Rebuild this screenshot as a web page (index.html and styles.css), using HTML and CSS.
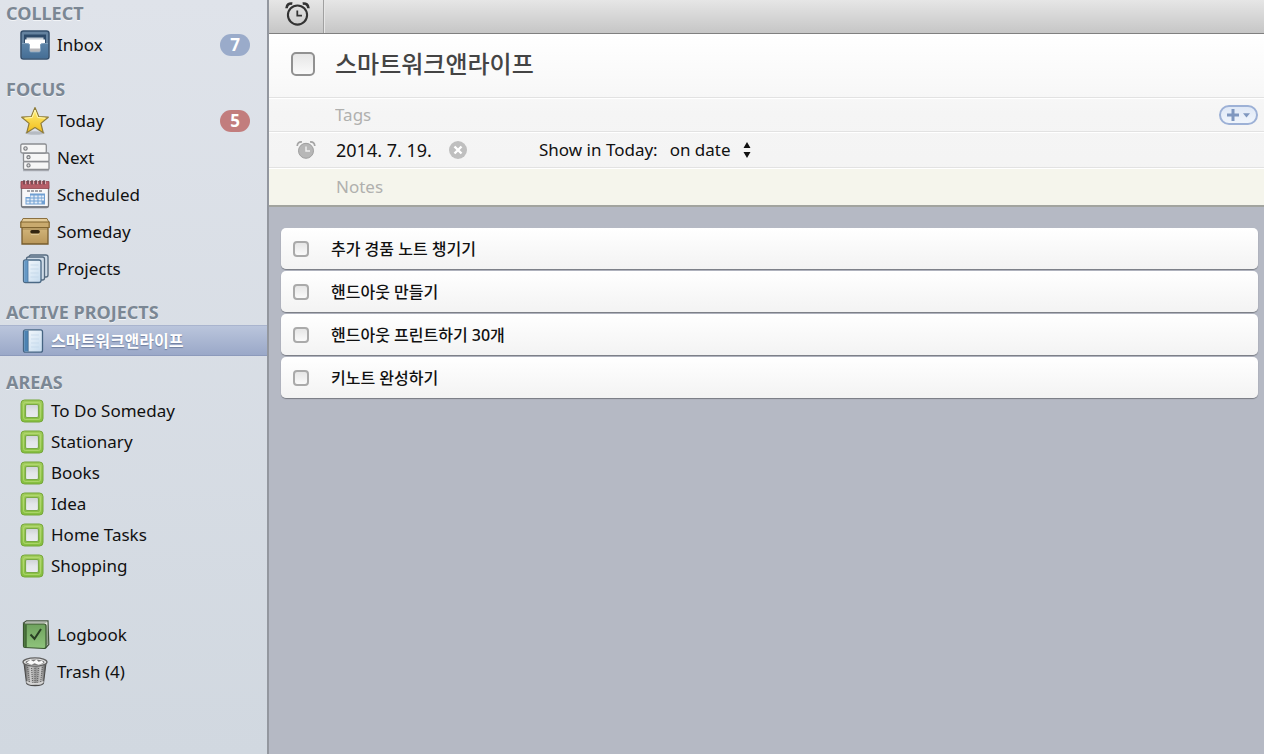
FILE: index.html
```html
<!DOCTYPE html>
<html lang="ko">
<head>
<meta charset="utf-8">
<meta name="viewport" content="width=device-width, initial-scale=1">
<title>Things</title>
<link rel="stylesheet" href="styles.css">
</head>
<body>
<svg class="defs" aria-hidden="true">
  <defs>
    <linearGradient id="g-blue" x1="0" y1="0" x2="0" y2="1"><stop offset="0" stop-color="#5c84a8"/><stop offset="1" stop-color="#456e95"/></linearGradient>
    <linearGradient id="g-star" x1="0" y1="0" x2="0" y2="1"><stop offset="0" stop-color="#fff27a"/><stop offset="1" stop-color="#f2bc1b"/></linearGradient>
    <linearGradient id="g-box" x1="0" y1="0" x2="0" y2="1"><stop offset="0" stop-color="#d3b67c"/><stop offset="1" stop-color="#b9975a"/></linearGradient>
    <linearGradient id="g-page" x1="0" y1="0" x2="1" y2="1"><stop offset="0" stop-color="#f8fbfe"/><stop offset="1" stop-color="#c5dbee"/></linearGradient>
    <linearGradient id="g-green" x1="0" y1="0" x2="0" y2="1"><stop offset="0" stop-color="#6fa25e"/><stop offset="1" stop-color="#8fc47c"/></linearGradient>
    <linearGradient id="g-can" x1="0" y1="0" x2="1" y2="0"><stop offset="0" stop-color="#555"/><stop offset=".3" stop-color="#ccc"/><stop offset=".55" stop-color="#929292"/><stop offset=".75" stop-color="#c4c4c4"/><stop offset="1" stop-color="#505050"/></linearGradient>
    <linearGradient id="g-area" x1="0" y1="0" x2="0" y2="1"><stop offset="0" stop-color="#a2cd5c"/><stop offset="1" stop-color="#86c03f"/></linearGradient>
    <linearGradient id="g-well" x1="0" y1="0" x2="0" y2="1"><stop offset="0" stop-color="#cfd2d7"/><stop offset=".5" stop-color="#e3e6ea"/><stop offset="1" stop-color="#e9ebee"/></linearGradient>
    <symbol id="i-area" viewBox="0 0 24 24">
      <rect x="1" y="1" width="22" height="22" rx="3.500" fill="url(#g-area)" stroke="#74a638"/>
      <rect x="3.500" y="3.500" width="17" height="17" rx="2" fill="none" stroke="#b9db7c" stroke-opacity=".7"/>
      <rect x="5.500" y="5.500" width="13" height="13" rx="1.500" fill="url(#g-well)" stroke="#7aa946" stroke-width="1.200"/>
    </symbol>
  </defs>
</svg>

<div class="app">
  <nav class="sidebar" aria-label="Lists">
    <section class="group">
      <h2 class="heading">COLLECT</h2>
      <a class="item" href="#inbox">
        <svg class="icon" viewBox="0 0 30 30"><rect x="1" y="1" width="28" height="28" rx="2.500" fill="#64829f" stroke="#35506d" stroke-width="1.500"/><path d="M4 4.500h22V14H4z" fill="#2d4a69"/><path d="M6.500 7.500h17V14h-17z" fill="#c6ced7"/><path d="M5 9.500h20V13h-3.500l-1.500 2v9H10v-9l-1.500-2H5z" fill="#fff"/><path d="M10 18.500h10V24H10z" fill="#b7b7ba"/><path d="M2 13.500h5.500c1.300 0 2 .7 2 2V20c0 1.500.5 2 2 2h7c1.500 0 2-.5 2-2v-4.500c0-1.300.7-2 2-2H28v13c0 1.200-.5 1.800-1.500 1.800h-23c-1 0-1.500-.6-1.500-1.800z" fill="url(#g-blue)"/><path d="M2 13.500h5.500c1.300 0 2 .7 2 2V20c0 1.500.5 2 2 2h7c1.500 0 2-.5 2-2v-4.500c0-1.300.7-2 2-2H28" fill="none" stroke="#8caac5" stroke-width=".8"/></svg>
        <span>Inbox</span><span class="badge badge-blue">7</span>
      </a>
    </section>

    <section class="group">
      <h2 class="heading">FOCUS</h2>
      <a class="item" href="#today">
        <svg class="icon" viewBox="0 0 30 30"><ellipse cx="15" cy="27" rx="10" ry="1.800" fill="#7d8189" opacity=".4"/><path d="M15 1.500l3.700 9 9.600.7-7.400 6.200 2.400 9.400-8.300-5.200-8.300 5.200 2.400-9.400-7.400-6.200 9.600-.7z" fill="url(#g-star)" stroke="#8f7c3a" stroke-width="1.200" stroke-linejoin="round"/><path d="M15 4l2.800 7.500 7.500.7M15 4l-2.800 7.500-7.500.7" fill="none" stroke="#fff9bd" stroke-width=".9"/></svg>
        <span>Today</span><span class="badge badge-red">5</span>
      </a>
      <a class="item" href="#next">
        <svg class="icon" viewBox="0 0 30 30"><path d="M3 27.500h26" stroke="#999ea6" stroke-width="1.500" opacity=".7"/><g fill="#f6f6f6" stroke="#8b8d91" stroke-width="1.300"><rect x="3.500" y="18.500" width="25.500" height="8" rx="1"/><rect x="3.500" y="10" width="25.500" height="8.500" rx="1"/><rect x=".8" y="1" width="25.500" height="9" rx="1.500"/></g><g fill="#ddd" stroke="#77797d" stroke-width="1.100"><circle cx="5.500" cy="5.500" r="1.700"/><circle cx="8.500" cy="14.200" r="1.600"/><circle cx="8.500" cy="22.400" r="1.600"/></g></svg>
        <span>Next</span>
      </a>
      <a class="item" href="#scheduled">
        <svg class="icon" viewBox="0 0 30 30"><path d="M1.500 6h27v19.500c0 1.500-.7 2-2 2h-23c-1.300 0-2-.5-2-2z" fill="#f7f7f8" stroke="#777b82" stroke-width="1.300"/><path d="M2 27h26" stroke="#7b7f86" stroke-width="2"/><path d="M1 1.500h28v7H1z" fill="#b65e68" stroke="#8e434d" stroke-width=".8"/><path d="M4 0v4.500M8 0v4.500M12 0v4.500M16 0v4.500M20 0v4.500M24 0v4.500" stroke="#59424a" stroke-width="1.200"/><path d="M5.500 0v4M9.500 0v4M13.500 0v4M17.500 0v4M21.500 0v4M25.500 0v4" stroke="#e4c8cc" stroke-width=".8"/><path d="M7 11h16" stroke="#85878c" stroke-width="1.300" stroke-dasharray="3 1"/><path d="M10 13.500h15v11H5.500V17H10z" fill="#6f9fd2"/><path d="M10.500 15.500h3v2h-3zM14.500 15.500h3v2h-3zM18.500 15.500h3v2h-3zM22 15.500h2v2h-2zM6.500 18.500h3v2h-3zM10.500 18.500h3v2h-3zM14.500 18.500h3v2h-3zM18.500 18.500h3v2h-3zM22 18.500h2v2h-2zM6.500 21.500h3v2h-3zM10.500 21.500h3v2h-3zM14.500 21.500h3v2h-3zM18.500 21.500h3v2h-3z" fill="#e4edf7"/></svg>
        <span>Scheduled</span>
      </a>
      <a class="item" href="#someday">
        <svg class="icon" viewBox="0 0 30 30"><path d="M2 10h26v17H2z" fill="url(#g-box)" stroke="#775c2e" stroke-width="1.300"/><path d="M3 1.500h24l2 4H1z" fill="#e3cb98" stroke="#8b7040" stroke-width="1"/><path d="M.8 5h28.400v5.500H.8z" fill="#c9aa6e" stroke="#80642f" stroke-width="1.200"/><path d="M2 12h26" stroke="#866b3a" stroke-width="1" opacity=".6"/><rect x="10.300" y="13" width="9.500" height="3.400" rx="1.600" fill="#332511"/><path d="M11 17.400h8" stroke="#e5cfa1" stroke-width=".8"/></svg>
        <span>Someday</span>
      </a>
      <a class="item" href="#projects">
        <svg class="icon" viewBox="0 0 30 30"><g fill="#cfdbe7" stroke="#566b80" stroke-width="1.300"><rect x="9" y="1" width="19" height="22" rx="2"/><rect x="6.500" y="3" width="18" height="23" rx="2"/></g><rect x="3.500" y="6" width="17.500" height="22.500" rx="2" fill="url(#g-page)" stroke="#4b6985" stroke-width="1.300"/><path d="M4.200 7.500c0-.7.300-1 1-1H8v21.500H5.200c-.7 0-1-.3-1-1z" fill="#6598c5"/><path d="M8 6.500V28" stroke="#49759f" stroke-width=".8"/><path d="M10.500 11h8M10.500 15h8M10.500 19h8M10.500 23h8" stroke="#c3d7e9" stroke-width=".8"/></svg>
        <span>Projects</span>
      </a>
    </section>

    <section class="group group-active">
      <h2 class="heading">ACTIVE PROJECTS</h2>
      <a class="item item-small selected" href="#project" aria-current="page">
        <svg class="icon-small" viewBox="0 0 24 24"><rect x="3.500" y=".8" width="19" height="22.400" rx="2" fill="url(#g-page)" stroke="#466482" stroke-width="1.300"/><path d="M4.200 2.300c0-.6.300-.9.900-.9H8v21.200H5.100c-.6 0-.9-.3-.9-.9z" fill="#4c82b2"/><path d="M8.300 1.500v21" stroke="#375d82" stroke-width=".7"/><path d="M11 6h8M11 10h8M11 14h8M11 18h8" stroke="#c3d7e9" stroke-width=".7"/></svg>
        <span>스마트워크앤라이프</span>
      </a>
    </section>

    <section class="group">
      <h2 class="heading">AREAS</h2>
      <a class="item item-small" href="#someday-area"><svg class="icon-small"><use href="#i-area"/></svg><span>To Do Someday</span></a>
      <a class="item item-small" href="#stationary"><svg class="icon-small"><use href="#i-area"/></svg><span>Stationary</span></a>
      <a class="item item-small" href="#books"><svg class="icon-small"><use href="#i-area"/></svg><span>Books</span></a>
      <a class="item item-small" href="#idea"><svg class="icon-small"><use href="#i-area"/></svg><span>Idea</span></a>
      <a class="item item-small" href="#home"><svg class="icon-small"><use href="#i-area"/></svg><span>Home Tasks</span></a>
      <a class="item item-small" href="#shopping"><svg class="icon-small"><use href="#i-area"/></svg><span>Shopping</span></a>
    </section>

    <section class="group group-archive">
      <a class="item" href="#logbook">
        <svg class="icon" viewBox="0 0 30 30"><path d="M3.500 3l3-2.200H28l.8 23.700L26 27.500z" fill="#e9ece6" stroke="#43533e" stroke-width="1.200"/><path d="M26.500 5l1.500-2v21L26 26z" fill="#93a08d"/><path d="M5.500 2.600h21" stroke="#9aa595" stroke-width=".8"/><path d="M3.500 4H24c1.500 0 2 .5 2 2v20.500c0 1.300-.5 2-2 2L5 27.500c-1 0-1.500-.5-1.500-1.500z" fill="url(#g-green)" stroke="#38552f" stroke-width="1.200"/><path d="M4.200 4.600h2.600v22.500H5c-.6 0-.8-.4-.8-1z" fill="#446c38"/><path d="M10.500 14.500l4 4.300L21 9" fill="none" stroke="#294024" stroke-width="2"/></svg>
        <span>Logbook</span>
      </a>
      <a class="item" href="#trash">
        <svg class="icon" viewBox="0 0 30 30"><path d="M4 6l2.500 20c.3 3.500 16.700 3.500 17 0L26 6z" fill="url(#g-can)" stroke="#4b4b4b" stroke-width="1.100"/><path d="M7.500 10l2 15M11.500 11l1.300 15M15 11v15M18.500 11l-1.300 15M22.500 10l-2 15" stroke="#666" stroke-width="1.200" stroke-dasharray="1 1"/><ellipse cx="15" cy="5" rx="12" ry="4.200" fill="#e4e4e4" stroke="#606060" stroke-width="1.300"/><ellipse cx="15" cy="5.300" rx="9.500" ry="2.700" fill="#777"/><path d="M6.500 5.500l4-2.800 3 1.700 3-2 2 2.300 3.500-1 1.500 2.300-5 1.800-4-1.500-3 1.500z" fill="#fafafa"/><path d="M6.500 24.500c2 3 15 3 17 0" fill="none" stroke="#d6d6d6" stroke-width="1.400"/></svg>
        <span>Trash (4)</span>
      </a>
    </section>
  </nav>

  <main class="main">
    <div class="toolbar">
      <button class="tool" type="button" aria-label="Schedule">
        <svg class="tool-icon" viewBox="0 0 24 24" fill="none" stroke="#333"><circle cx="12" cy="13.500" r="9.200" stroke-width="2"/><path d="M11.800 9v5h4.500" stroke-width="1.700"/><path d="M1.500 7c0-3.500 2.500-5 5.500-4.500M22.500 7c0-3.500-2.500-5-5.500-4.500" stroke-width="2.600"/></svg>
      </button>
    </div>

    <header class="details">
      <div class="title-row">
        <input class="check check-large" type="checkbox" id="project-done">
        <label class="title" for="project-done">스마트워크앤라이프</label>
      </div>
      <div class="row tags-row">
        <input class="field" type="text" placeholder="Tags" aria-label="Tags">
        <button class="add-tag" type="button" aria-label="Add tag">
          <svg class="add-icon" viewBox="0 0 26 14"><path d="M7 1v12M1 7h12" stroke="#7f97bf" stroke-width="3"/><path d="M17 5.300h7L20.500 9.500z" fill="#7f97bf"/></svg>
        </button>
      </div>
      <div class="row date-row">
        <svg class="date-icon" viewBox="0 0 20 20"><path d="M1.200 6C1.500 3 3.500 1.800 6 2M18.800 6c-.3-3-2.300-4.200-4.800-4" fill="none" stroke="#a4a4a4" stroke-width="1.700"/><circle cx="10" cy="10.800" r="7.500" fill="#b7b7b7" stroke="#9f9f9f"/><path d="M10 6.500V11h4" fill="none" stroke="#eee" stroke-width="1.500"/></svg>
        <time class="date" datetime="2014-07-19">2014. 7. 19.</time>
        <button class="clear" type="button" aria-label="Clear date">
          <svg viewBox="0 0 18 18"><circle cx="9" cy="9" r="9" fill="#bfbfbf"/><path d="M5.500 5.500l7 7M12.500 5.500l-7 7" stroke="#fff" stroke-width="2.400"/></svg>
        </button>
        <label class="show-label" for="show-when">Show in Today:</label>
        <span class="picker">
          <select id="show-when"><option>on date</option></select>
          <svg class="picker-arrows" viewBox="0 0 8 16"><path d="M4 0l3.500 6h-7zM4 16l3.500-6h-7z" fill="#111"/></svg>
        </span>
      </div>
      <div class="row notes-row">
        <textarea class="field" rows="1" placeholder="Notes" aria-label="Notes"></textarea>
      </div>
    </header>

    <ul class="tasks">
      <li class="task"><input class="check" type="checkbox" id="t1"><label for="t1">추가 경품 노트 챙기기</label></li>
      <li class="task"><input class="check" type="checkbox" id="t2"><label for="t2">핸드아웃 만들기</label></li>
      <li class="task"><input class="check" type="checkbox" id="t3"><label for="t3">핸드아웃 프린트하기 30개</label></li>
      <li class="task"><input class="check" type="checkbox" id="t4"><label for="t4">키노트 완성하기</label></li>
    </ul>
  </main>
</div>
</body>
</html>
```
FILE: styles.css
```css
* { box-sizing: border-box; }

body {
  margin: 0;
  font: 17px/24px "Noto Sans", "Noto Sans CJK KR", sans-serif;
  color: #111;
}

button, input, select, textarea { font: inherit; color: inherit; margin: 0; }
button { border: 0; padding: 0; background: none; }
svg { display: block; }

.defs { position: absolute; width: 0; height: 0; }

.app {
  display: grid;
  grid-template-columns: 269px 1fr;
  min-height: 100vh;
}

/* Sidebar */
.sidebar {
  border-right: 2px solid #93979f;
  background: linear-gradient(#dfe3ea, #d1d8e0);
}

.group { margin-bottom: 13px; }
.group-active { margin-top: -1px; }
.group-archive { margin-top: 35px; margin-bottom: 0; }

.heading {
  margin: 0;
  padding-left: 6px;
  font-size: 18px;
  font-weight: 700;
  line-height: 26px;
  color: #7b8794;
  text-shadow: 0 1px 0 #f2f4f7;
}

.item {
  display: flex;
  align-items: center;
  gap: 7px;
  min-height: 37px;
  padding: 0 17px 0 20px;
  color: #111;
  text-decoration: none;
}

.item-small { min-height: 31px; }
.icon { width: 30px; height: 30px; }
.icon-small { width: 24px; height: 24px; }

.selected {
  border-top: 1px solid #a9b4ce;
  border-bottom: 1px solid #8c9abb;
  background: linear-gradient(#bac5dc, #9aa8c8);
  color: #fff;
  font-size: 16px;
  font-weight: 700;
  text-shadow: 0 1px 1px #6f7e9e;
}

.badge {
  margin-left: auto;
  width: 30px;
  border-radius: 11px;
  color: #fff;
  font-weight: 700;
  line-height: 22px;
  text-align: center;
}

.badge-blue { background: #9aabca; }
.badge-red { background: #c27d7d; }

/* Main column */
.main { background: #b5b9c4; min-width: 0; }

.toolbar {
  display: flex;
  height: 34px;
  border-bottom: 1px solid #808080;
  background: linear-gradient(#e6e6e6, #c6c6c6);
}

.tool {
  display: flex;
  width: 55px;
  padding: 1px 0 0 16px;
  border-right: 1px solid #a0a0a0;
  box-shadow: 1px 0 0 #e6e6e6;
}

.tool-icon { width: 25px; height: 25px; }

.details {
  border-bottom: 2px solid #a2a49f;
  background: linear-gradient(#fff, #f5f5f5 80px, #f3f3f3);
}

.title-row {
  display: flex;
  align-items: center;
  gap: 20px;
  min-height: 63px;
  padding: 0 22px 4px;
}

.title { font-size: 24px; font-weight: 500; line-height: 36px; color: #444; }

.row {
  display: flex;
  align-items: center;
  border-top: 1px solid #e2e2e2;
  box-shadow: inset 0 1px 0 #fff;
}

.field {
  flex: 1;
  min-width: 0;
  height: 24px;
  padding: 0;
  border: 0;
  outline: 0;
  resize: none;
  overflow: hidden;
  background: none;
}

.field::placeholder { color: #b0b0ae; opacity: 1; }

.tags-row { min-height: 34px; padding: 0 6px 0 66px; }
.date-row { min-height: 36px; padding-left: 27px; }
.notes-row { min-height: 38px; padding-left: 67px; background: #f5f5ec; }

.add-tag {
  display: grid;
  place-items: center;
  width: 39px;
  height: 20px;
  border: 2px solid #9db1d6;
  border-radius: 10px;
  background: linear-gradient(#dfe8f6, #f0f5fc);
}

.add-icon { width: 26px; height: 14px; }

.date-icon { width: 20px; height: 20px; margin-right: 20px; }
.date { min-width: 101px; font-size: 18px; }
.clear { width: 18px; height: 18px; margin-left: 12px; }
.show-label { margin-left: 72px; }

.picker { position: relative; margin-left: 12px; }

.picker select {
  display: block;
  appearance: none;
  height: 24px;
  padding: 0 20px 0 0;
  border: 0;
  background: none;
}

.picker-arrows {
  position: absolute;
  top: 4px;
  right: 0;
  width: 8px;
  height: 16px;
  pointer-events: none;
}

.check {
  appearance: none;
  flex: none;
  width: 16px;
  height: 16px;
  border: 2px solid #aaa;
  border-radius: 4px;
  background: linear-gradient(#e6e6e6, #fafafa);
}

.check-large {
  width: 24px;
  height: 24px;
  border-color: #919191;
  border-radius: 5px;
}

.check:checked { background: #8fa9d6; }

.tasks {
  display: grid;
  gap: 2px;
  margin: 0;
  padding: 21px 6px 21px 12px;
  list-style: none;
}

.task {
  display: flex;
  align-items: center;
  gap: 22px;
  min-height: 41px;
  padding: 0 12px;
  border-radius: 5px;
  background: linear-gradient(#fff, #f3f3f3);
  box-shadow: 0 1px 1px #777a82;
  font-size: 16px;
  font-weight: 500;
}
```
